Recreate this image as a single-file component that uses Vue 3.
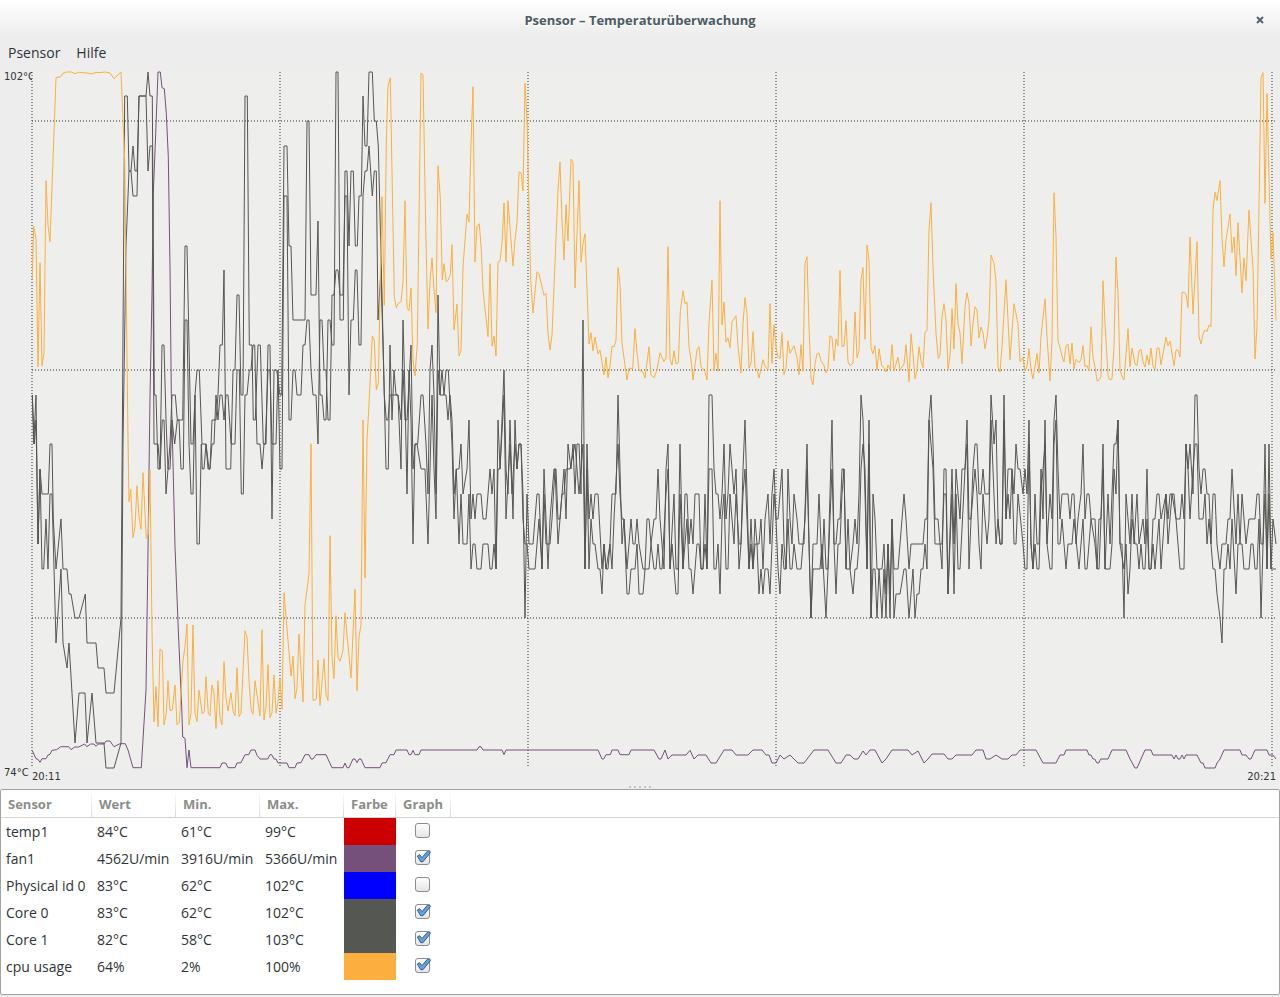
<script setup>
import { reactive, computed } from 'vue'

// Plot space: x 32..1276, y 72..768. Samples are recorded in blocks; each block
// has a pixel origin and its samples are stored in thirds of a pixel.
const PLOT = { left: 32, top: 72, right: 1276, bottom: 768 }
const PER_DEGREE = (PLOT.bottom - PLOT.top) / 28

const parse = (text) => text.trim().split(/\s+/).map((pair) => pair.split(',').map(Number))

const trace = (blocks) =>
  blocks
    .flatMap(([x, y, text]) => parse(text).map(([px, py]) => [x + px / 3, y + py / 3]))
    .map(([x, y]) => `${x.toFixed(1)},${y.toFixed(1)}`)
    .join(' ')

// Temperature samples hold the number of degrees below 102 °C.
const degrees = (blocks) =>
  blocks
    .flatMap(([x, text]) => parse(text).map(([px, d]) => [x + px / 3, PLOT.top + d * PER_DEGREE]))
    .map(([x, y]) => `${x.toFixed(1)},${Math.floor(y)}`)
    .join(' ')

const cpu = trace([
  [0, 60, `97,658 101,498 108,535 114,920 120,608 126,917 132,880 138,362 144,495 150,545 168,53 182,50
    190,39 200,36 214,36 225,41 236,37 260,39 276,42 288,37 296,38 316,36 330,39 342,56 363,36 374,300 384,1140`],
  [0, 430, `387,215 392,178 399,323 405,290 411,167 417,260 423,298 429,128 435,250 439,326 445,313 450,120
    456,600 462,876 468,770 474,890 480,657 487,662 492,885 499,850 504,752 510,842 517,840 525,765 531,884
    538,878 549,690 555,650 561,582 567,885 573,850 579,585 585,850 591,875 597,780 607,852 613,845 618,740
    625,850`],
  [210, 430, `0,857 6,765 12,790 18,896 24,752 30,862 36,885 42,695 48,805 54,843 63,788 69,843 75,858 81,713
    87,860 93,850 105,602 111,620 117,750 123,838 129,853 135,752 150,858 156,599 162,870 168,830 174,704
    180,863 186,848 192,735 198,850 204,815 210,745 216,838 222,488 243,738 249,678 255,806 261,775 267,612
    273,720 279,816 285,525 297,432 303,41 309,812 319,807 324,690 330,827 342,686 348,793 354,812 360,317
    366,680 372,746 378,557 384,682 390,694 399,662 405,548 423,744 435,478 441,782 447,620 453,585 459,-30
    465,444 471,30`],
  [210, 60, `476,1050 487,828 493,840 499,990 505,970 516,410 523,736 529,250 534,78 541,53 553,710 559,743
    565,730 573,725 579,665 585,422 591,743 597,752 603,684 609,900 615,947 622,850`],
  [420, 60, `3,39 9,44 17,500 24,807 30,665 36,594 42,690 48,758 54,317 61,415 67,660 72,611 79,665 85,660
    91,644 96,554 102,810 111,732 117,888 123,872 129,620 141,462 147,486 153,250 159,80 165,606 171,500
    178,491 184,570 189,690 204,830 210,611 216,858 222,828 228,888 234,606 240,603 246,550 252,429 258,606
    264,422 279,618 285,540 291,488 297,336 303,338 309,393 315,69 321,180 327,440 332,660 339,760 351,635
    357,642 366,680 372,706 378,700 384,820 390,870 396,825 402,680 414,390 420,306 426,480 432,600 438,434
    444,543 453,297 459,308 465,684 477,362 483,606 489,550 495,521 507,852 513,818 519,873 525,831 534,882
    540,870 552,944 558,891 564,954 570,918 576,858 582,861 588,840 594,623 600,670 606,850 621,960 627,924`],
  [630, 180, `8,566 15,446 21,518 27,570 39,576 45,594 57,500 63,585 72,593 81,570 90,518 102,545 108,533
    114,200 120,538 126,555 132,512 138,552 145,548 151,395 159,332 165,371 171,367 177,500 183,540 189,600
    201,510 207,500 213,560 225,575 231,600 237,430 246,301 252,573 258,520 264,574 270,62 276,435 282,366
    288,486 294,474 300,503 306,426 318,407 324,500 333,579 339,430 345,353 351,400 357,565 363,550 369,455
    375,562 381,570 387,594 399,539 405,558 414,570 420,371 426,550 432,434 438,500 444,530 450,536 456,458
    462,584 468,565 474,482 480,520 492,497 501,533 507,584 513,494 519,574 525,250 531,230 537,440 543,595
    549,615 555,550 561,522 567,519 573,543 582,557 588,578 594,565 600,467 606,472 612,543 618,477 624,497`],
  [840, 180, `0,271 6,500 12,498 18,422 24,545 30,557 39,549 45,396 51,533 57,512 63,300 69,263 75,478 81,195
    87,240 93,505 99,521 105,497 111,570 117,506 125,557 132,563 138,576 144,555 150,568 156,494 162,573
    174,531 180,570 192,551 198,494 207,605 213,461 219,520 225,597 231,570 237,500 243,543 249,563 255,456
    261,452 267,150 273,68 279,260 288,460 295,536 300,525 306,410 312,371 318,420 324,569 330,530 336,386
    342,507 348,311 354,432 360,460 366,551 375,380 381,338 387,370 393,498 399,430 405,380 411,390 417,474
    423,441 429,458 435,507 441,474 447,420 453,225 462,250 468,305 474,560 480,576 486,500 498,299 510,540
    522,371 534,432 540,545 549,533 555,572 561,560 567,506 573,570 579,597 591,521 597,579 603,470 615,356
    621,470 630,603 636,480`],
  [1050, 60, `12,398 18,530 24,843 30,862 36,889 42,906 48,858 54,852 60,912 66,849 72,927 78,898 87,908
    93,898 99,857 105,920 111,917 117,933 123,800 129,893 135,920 141,963 147,960 153,950 159,662 165,790
    174,948 180,960 186,957 192,860 198,591 204,700 210,930 216,950 222,960 234,806 240,920 246,864 255,912
    261,917 267,873 273,868 279,906 285,921 291,885 297,915 303,864 309,920 315,928 321,864 327,864 333,915
    348,831 354,857 360,843 372,917 378,870 384,870 390,891 396,697 402,697 408,702 414,743 420,531 429,762
    441,545 447,830 453,852 459,822 465,810 471,815 477,795 483,800 489,450 495,396 501,422 510,362 516,535
    522,621 528,540 540,462 546,578 552,531 558,647 564,488 576,699 582,594 588,662 597,450 603,540 609,625
    615,897 621,800 627,440 633,53 639,38 645,430 651,101 663,597 669,518 678,782`],
])

const fan = trace([
  [0, 430, `97,962 108,986 114,988 120,997 126,986 138,986 144,975 150,973 156,961 170,959 182,950 206,950
    213,959 224,951 236,951 254,942 260,950 272,942 282,942 288,949 295,942 312,942 318,933 330,933 336,942
    342,950 360,941 376,941 384,960 399,1013 424,1013 438,780 443,430`],
  [0, 60, `450,1011 456,700 460,400 467,220 474,36 481,36 486,83 493,86 499,160 505,290 510,620 514,1000`],
  [0, 430, `518,60 525,350 535,600 545,830 548,921 555,925 561,1013 567,960 573,1013`],
  [210, 430, `0,1013 30,1013 36,999 47,999 54,1013 75,1013 81,999 93,998 105,974 116,974 123,960 135,960
    141,976 150,987 173,987 180,974 185,974 192,987 198,987 204,999 231,999 237,1013 255,1013 261,999
    273,998 285,974 297,974 303,987 309,987 318,974 348,974 366,1013 399,1013 405,999 411,1013 417,1013
    429,987 435,987 441,998 447,987 453,987 465,1013 510,1013 516,999 528,998 540,974 552,974 558,960
    591,960 597,974 603,974 609,961 615,974 627,974`],
  [420, 370, `3,1140 171,1140 177,1130 183,1130 189,1140 246,1140 252,1154 258,1140 534,1140 546,1167
    551,1167 558,1154 571,1154 576,1140 594,1140 600,1154 627,1154 633,1140`],
  [630, 430, `72,960 87,987 93,987 105,960 114,987 126,975 168,975 180,961 192,987 204,975 228,975 243,999
    258,999 282,960 306,960 318,975 354,975 369,960 396,960 408,975 417,975 426,999 438,999 450,975 462,987
    480,975 504,999 522,999 552,960 594,960 618,999 633,999 648,975 660,975 672,987 684,987 699,963 708,975
    720,960 735,960 756,999 768,987 786,960 834,960 846,975 864,963 882,999 894,987 906,972 942,972 954,987
    966,987 978,975 1026,975 1038,960 1059,960 1068,987 1080,987 1098,975 1116,987 1134,987 1146,975
    1158,975 1170,960 1218,960 1239,999`],
  [1050, 380, `0,1149 18,1149 30,1125 42,1125 48,1110 111,1110 117,1125 123,1125 129,1137 134,1137 141,1149
    146,1149 152,1137 174,1137 186,1110 228,1110 240,1137 255,1164 261,1164 285,1110 303,1110 309,1125
    366,1125 372,1137 378,1125 384,1137 390,1137 396,1125 402,1137 408,1125 441,1125 453,1149 459,1149
    465,1164 495,1164 501,1149 510,1137 522,1110 570,1110 576,1125 588,1125 597,1137 603,1137 615,1110
    651,1110 657,1125 669,1125 678,1137`],
])

const core0 = degrees([
  [0, `97,13 101,15 108,13 114,19 120,16 126,17 145,17 150,15 156,15 160,18 168,20 183,18 189,20 201,20
    207,21 213,21 225,22 237,22 256,21 261,23 288,23 294,24 312,24 318,25 342,25 363,22 374,1 382,1 387,4
    393,4 399,3 405,4 411,4 417,1 438,1 444,0 450,1 457,1 463,13 468,13 474,16 480,16 486,11 492,11 498,14
    504,16 510,15 516,13 526,13 532,14 548,14 555,7 561,7 567,11 573,15 579,15 585,13 591,12 598,12 606,15
    618,15 624,16 630,16`],
  [210, `6,14 18,14 24,13 30,11 37,11 42,8 48,16 62,16 69,12 75,12 81,9 87,9 93,13 99,13 105,1 112,1
    118,11 126,11 130,14 136,14 144,11 151,11 160,15 168,15 174,11 180,11 186,18 192,12 200,12 210,13 215,13
    222,3 231,3 237,7 243,7 249,10 285,10 291,2 297,2 303,9 318,9 324,6 330,13 336,13 342,14 348,14 354,10
    360,10 366,11 372,11 378,0 384,0 390,10 400,10 405,4 411,4 417,7 423,4 430,4 436,7 442,7 447,5 454,5
    459,1 465,3 471,3 477,0 487,0 493,2 499,2 505,3 516,9 528,16 535,16 540,11 546,14 552,12 558,13 564,13
    573,16 579,10 585,13 591,17 597,12 603,14 609,19 615,15 623,15 628,14`],
  [420, `3,13 9,13 18,15 24,17 30,12 36,11 42,13 48,17 54,9 60,13 78,13 84,14 90,13 96,14 102,17 109,16
    117,16 123,15 129,17 141,16 147,14 153,18 159,17 165,18 171,17 183,17 189,18 198,18 204,17 210,16 216,17
    222,16 228,20 234,14 240,16 246,14 252,12 258,16 264,17 270,14 279,18 285,14 291,16 297,15 303,15 309,17
    315,22 321,17 327,19 339,19 351,17 357,17 366,20 372,16 378,18 384,20 390,18 402,16 408,16 414,18 420,18
    432,16 438,18 444,15 453,16 459,15 465,17 471,15 477,15 483,17 489,10 495,20 501,15 507,18 513,17 519,18
    525,17 534,17 546,20 552,19 558,20 570,19 576,17 588,17 594,13 600,16 606,19 612,18 621,20`],
  [630, `3,18 9,19 15,19 21,18 27,19 39,20 45,20 51,18 57,18 63,19 72,18 78,18 84,16 90,18 102,20 108,16
    114,15 120,20 132,17 138,20 144,20 150,15 159,20 165,17 171,17 177,19 183,18 189,19 195,17 207,17 213,20
    219,20 225,17 231,20 237,13 246,13 252,16 258,17 264,17 270,18 276,17 282,15 288,18 294,17 300,15 312,17
    318,16 327,20 333,19 339,16 345,14 351,17 357,20 363,18 369,20 375,18 381,19 387,19 393,18 399,20 405,18
    414,17 420,19 426,17 432,16 438,18 444,18 456,16 462,19 468,20 474,16 480,18 486,19 492,17 501,18 507,19
    522,19 531,15 537,19 543,22 549,19 561,19 567,17 576,20 582,18 588,20 594,20 600,17 606,14 612,19 618,19
    624,18`],
  [840, `0,18 6,16 12,16 18,20 24,18 30,20 39,19 45,18 51,19 57,17 63,13 69,14 75,17 81,20 87,14 93,22
    99,17 105,18 111,20 126,20 132,19 138,21 144,19 150,21 156,18 162,20 174,20 180,19 192,17 198,18 207,20
    213,19 249,19 255,18 261,18 267,14 273,13 279,15 285,18 294,18 306,20 312,16 318,16 324,21 336,16 342,19
    348,16 360,18 366,16 375,16 381,14 387,18 393,18 399,16 405,15 411,15 417,17 423,17 429,16 435,17 447,17
    453,13 462,15 468,14 474,18 480,19 486,19 492,13 498,18 504,16 516,16 522,17 528,15 534,16 540,16 549,17
    555,16 561,17 567,14 573,19 579,20 585,17 591,19 597,19 603,16 609,18 615,14 621,19 630,17 636,18 642,14`],
  [1050, `18,13 24,16 30,18 36,17 54,17 60,18 66,17 72,17 78,19 84,18 93,17 99,15 105,18 111,17 117,17
    123,18 135,18 141,20 147,18 153,18 159,15 165,20 174,17 180,19 192,15 198,15 204,14 210,19 216,19 222,22
    228,17 240,19 246,17 252,19 261,17 267,19 279,18 285,19 291,16 297,20 303,20 309,18 315,18 321,17 327,17
    333,18 348,17 354,18 360,17 372,17 378,18 390,18 396,17 402,18 408,15 414,16 420,15 429,17 435,13 441,13
    447,16 453,17 459,16 465,16 471,17 477,17 483,19 489,17 495,17 501,19 510,20 516,19 528,19 534,18 540,18
    546,16 558,19 564,17 570,19 576,17 588,19 597,18 615,18 621,17 627,17 633,19 639,19 645,15 651,20 657,15
    663,20 669,18 678,19`],
])

const core1 = degrees([
  [0, `97,13 103,15 108,14 114,19 120,16 126,20 131,20 138,18 144,20 150,17 156,17 168,23 183,20 189,23
    201,24 207,23 225,27 237,25 255,25 261,27 276,25 288,27 312,27 318,28 342,28 363,27 369,15 378,7 387,4
    393,4 399,5 411,5 417,1 438,1 444,4 450,3 457,3 462,15 474,15 480,16 487,14 492,14 498,17 504,16 510,16
    516,14 524,15 532,14 537,14 543,16 550,16 555,10 561,10 567,15 573,17 579,17 585,13 591,19 598,19 604,15
    607,16 612,16 618,15 627,16`],
  [210, `0,16 6,15 12,15 18,13 24,14 30,13 36,13 42,14 48,13 54,13 63,15 75,15 81,12 88,12 94,17 100,17
    105,13 111,13 118,12 123,12 129,11 134,11 141,15 150,15 156,16 162,15 166,15 174,12 180,12 186,15 198,15
    204,12 210,16 216,16 222,5 231,5 237,14 243,14 249,12 255,12 261,13 273,13 279,11 285,11 291,10 297,10
    303,12 309,13 318,13 324,15 330,10 336,10 342,12 348,12 354,14 360,14 366,9 372,9 378,8 384,8 390,9
    399,9 405,5 411,5 417,13 423,10 430,10 436,8 441,8 447,11 453,11 459,5 465,4 471,4 477,3 487,5 493,4
    499,4 504,10 513,8 523,13 529,14 534,14 540,13 564,13 573,14 579,12 585,14 591,14 603,11 609,16 615,15
    621,15`],
  [420, `3,16 15,16 24,19 30,16 36,13 42,16 48,18 54,12 60,13 66,12 72,13 78,12 85,12 96,15 102,18 109,16
    117,19 123,17 129,19 141,19 147,17 153,20 159,19 165,19 171,20 183,20 189,19 204,19 210,20 216,20 222,19
    228,20 234,16 240,16 252,13 258,18 270,15 276,17 285,15 291,16 297,15 303,15 309,18 315,19 321,19 327,20
    345,20 357,18 366,20 372,17 378,19 390,19 396,18 405,16 414,19 426,17 432,17 438,16 450,16 465,15 477,17
    483,16 489,15 495,20 501,16 507,20 513,18 519,19 525,19 534,20 540,20 546,21 552,19 558,20 564,20 570,19
    576,20 582,18 594,15 600,17 606,18 612,18 621,21 627,21`],
  [630, `3,20 15,20 21,19 27,21 39,21 45,20 57,20 63,19 72,20 78,20 84,19 90,20 96,20 108,17 114,16 120,20
    126,19 138,21 144,21 150,17 159,20 165,19 171,18 177,20 183,20 189,21 201,19 207,19 213,20 219,20 225,19
    231,20 237,16 246,16 252,20 258,20 264,19 270,21 276,18 282,17 288,20 294,20 300,17 312,19 318,17 327,19
    333,19 339,17 345,16 357,20 363,19 369,20 375,19 381,19 387,21 393,20 399,21 405,20 414,20 420,21 432,17
    438,18 444,20 450,21 456,19 462,20 468,20 474,18 480,20 486,20 492,19 501,20 513,20 519,19 525,18 531,16
    537,19 543,22 549,20 570,20 576,19 588,22 594,20 606,16 612,19 618,21 624,19`],
  [840, `0,19 6,17 12,16 18,20 30,20 39,21 45,20 51,20 57,19 63,16 69,15 75,16 81,20 87,15 93,22 99,20
    105,20 111,22 117,20 126,22 132,20 138,22 144,19 150,22 156,18 162,22 168,21 180,21 192,20 198,20 207,22
    219,20 225,22 231,21 237,21 243,20 249,20 255,19 261,20 267,14 273,15 279,16 285,19 306,19 312,17 318,17
    324,21 336,17 342,21 348,17 354,20 360,20 375,16 381,15 387,20 393,18 405,16 411,17 417,19 423,20 429,17
    441,19 447,18 453,14 468,19 474,18 480,19 486,19 492,14 498,18 504,17 510,18 516,16 522,19 528,19 534,17
    549,19 555,20 561,20 567,15 573,19 579,20 585,19 591,20 597,20 603,17 615,15 621,19 630,20 636,20 642,15`],
  [1050, `18,14 24,19 30,19 36,18 48,20 54,19 66,19 72,18 87,20 99,18 105,20 111,20 123,18 135,19 141,20
    147,20 159,16 165,20 180,20 186,19 192,16 198,17 204,14 210,19 222,20 228,19 234,21 240,20 246,18 255,19
    261,19 267,20 273,19 279,20 285,20 291,18 297,20 303,20 309,19 315,20 327,18 333,20 348,17 354,19 366,17
    378,18 390,20 402,20 408,15 414,16 420,18 429,16 435,15 441,15 447,18 459,18 465,17 471,19 477,18 489,20
    495,20 501,21 510,22 516,23 522,20 528,20 534,19 540,20 546,18 558,21 564,19 576,19 582,20 597,20 603,19
    609,19 615,20 621,20 627,18 633,22 639,19 645,17 651,20 657,17 663,20 678,20`],
])

const sensors = reactive([
  { id: 'temp1', name: 'temp1', value: '84°C', min: '61°C', max: '99°C', color: '#cc0000', graph: false },
  { id: 'fan1', name: 'fan1', value: '4562U/min', min: '3916U/min', max: '5366U/min', color: '#75507b', graph: true, points: fan },
  { id: 'phys', name: 'Physical id 0', value: '83°C', min: '62°C', max: '102°C', color: '#0000ff', graph: false },
  { id: 'core0', name: 'Core 0', value: '83°C', min: '62°C', max: '102°C', color: '#555753', graph: true, points: core0 },
  { id: 'core1', name: 'Core 1', value: '82°C', min: '58°C', max: '103°C', color: '#555753', graph: true, points: core1 },
  { id: 'cpu', name: 'cpu usage', value: '64%', min: '2%', max: '100%', color: '#fcaf3e', graph: true, points: cpu },
])

const plotted = computed(() => sensors.filter((s) => s.graph && s.points))
const gridX = [32, 280, 528, 776, 1024, 1272]
const gridY = [121, 370, 618]
const dots = [0, 1, 2, 3, 4]
</script>

<template>
  <div class="window">
    <header class="titlebar">
      <h1>Psensor – Temperaturüberwachung</h1>
      <button class="close" type="button" aria-label="Schließen">
        <svg viewBox="0 0 8 8" width="8" height="8"><path d="M1 1L7 7M7 1L1 7" /></svg>
      </button>
    </header>

    <nav class="menubar">
      <button type="button">Psensor</button>
      <button type="button">Hilfe</button>
    </nav>

    <section class="chart">
      <div class="y-axis"><span>102°C</span><span>74°C</span></div>
      <svg class="plot" viewBox="32 72 1244 696" preserveAspectRatio="none">
        <g class="grid">
          <line v-for="x in gridX" :key="'x' + x" :x1="x" :x2="x" y1="72" y2="768" />
          <line v-for="y in gridY" :key="'y' + y" x1="32" x2="1276" :y1="y" :y2="y" />
        </g>
        <polyline v-for="s in plotted" :key="s.id" class="series" :points="s.points" :stroke="s.color" />
      </svg>
      <div class="x-axis"><span>20:11</span><span>20:21</span></div>
    </section>

    <div class="splitter"><i v-for="d in dots" :key="d"></i></div>

    <section class="panel">
      <table>
        <colgroup>
          <col class="c-name" /><col class="c-val" /><col class="c-val" /><col class="c-val" />
          <col class="c-color" /><col class="c-graph" /><col />
        </colgroup>
        <thead>
          <tr>
            <th>Sensor</th><th>Wert</th><th>Min.</th><th>Max.</th><th>Farbe</th><th>Graph</th><td></td>
          </tr>
        </thead>
        <tbody>
          <tr v-for="s in sensors" :key="s.id">
            <td><label :for="s.id">{{ s.name }}</label></td>
            <td>{{ s.value }}</td>
            <td>{{ s.min }}</td>
            <td>{{ s.max }}</td>
            <td :style="{ background: s.color }"></td>
            <td class="toggle">
              <span class="check">
                <input :id="s.id" v-model="s.graph" type="checkbox" />
                <svg v-if="s.graph" viewBox="0 0 48 45" width="16" height="15">
                  <path d="M7 18L14 14L21 23L38 3Q46 0 46 8L24 35L17 35Z" />
                </svg>
              </span>
            </td>
            <td></td>
          </tr>
        </tbody>
      </table>
    </section>
  </div>
</template>

<style>
body {
  margin: 0;
  background: #ededed;
}
</style>

<style scoped>
.window {
  display: flex;
  flex-direction: column;
  box-sizing: border-box;
  min-height: 100vh;
  padding-bottom: 2px;
  color: #2e3436;
  background: #ededed;
  font-family: "Open Sans", "Noto Sans", sans-serif;
  font-size: 14px;
}
button {
  padding: 0;
  border: 0;
  background: none;
  color: inherit;
  font: inherit;
}
.titlebar {
  display: grid;
  grid-template-columns: 41px 1fr 41px;
  align-items: center;
  height: 40px;
  background: linear-gradient(#ffffff, #ededed 36px);
}
h1 {
  grid-column: 2;
  margin: 0;
  color: #4b5b63;
  font-size: 13px;
  font-weight: 700;
  line-height: 20px;
  text-align: center;
  text-shadow: 0 1px #ffffff;
}
.close {
  display: flex;
  justify-content: center;
}
.close path {
  fill: none;
  stroke: #56666d;
  stroke-width: 2;
}
.menubar {
  display: flex;
  gap: 16px;
  height: 32px;
  padding: 0 8px;
  line-height: 26px;
}
.menubar button {
  height: 26px;
}
.chart {
  display: grid;
  flex: 1;
  grid-template-columns: 32px 1fr;
  grid-template-rows: 1fr 16px;
  min-height: 240px;
  padding-right: 4px;
  font: 10px/10px "DejaVu Sans", sans-serif;
}
.y-axis {
  display: flex;
  grid-row: 1 / 3;
  flex-direction: column;
  justify-content: space-between;
  padding: 0 0 6px 4px;
  white-space: nowrap;
}
.plot {
  width: 100%;
  height: 100%;
  min-height: 0;
  overflow: visible;
  background: #eeeeec;
  contain: size;
}
.grid line {
  stroke: #2e2e2e;
  stroke-dasharray: 1 2;
  vector-effect: non-scaling-stroke;
}
.series {
  fill: none;
  stroke-width: 1;
  vector-effect: non-scaling-stroke;
}
.x-axis {
  display: flex;
  justify-content: space-between;
  padding-top: 4px;
}
.splitter {
  display: flex;
  justify-content: center;
  align-items: center;
  gap: 3px;
  height: 5px;
}
.splitter i {
  width: 2px;
  height: 2px;
  background: #c6c6c6;
}
.panel {
  padding-bottom: 14px;
  border: 1px solid #a1a5a2;
  border-radius: 2px;
  background: #ffffff;
}
table {
  width: 100%;
  border-collapse: collapse;
  table-layout: fixed;
}
.c-name {
  width: 91px;
}
.c-val {
  width: 84px;
}
.c-color {
  width: 52px;
}
.c-graph {
  width: 55px;
}
thead tr {
  height: 28px;
  background: linear-gradient(to top, #d3d3d1 1px, #ffffff 1px);
}
th {
  padding: 0 0 0 7px;
  background: linear-gradient(#ffffff, #d8d8d6) right / 1px 100% no-repeat;
  color: #8b8d88;
  font-size: 13px;
  font-weight: 700;
  text-align: left;
}
tbody tr {
  height: 27px;
}
td {
  padding: 0 0 0 5px;
  white-space: nowrap;
}
.toggle {
  padding: 0 2px 0 0;
  text-align: center;
}
.check {
  position: relative;
  display: block;
  width: 15px;
  height: 15px;
  margin: 0 auto 2px;
}
.check input {
  display: block;
  box-sizing: border-box;
  width: 15px;
  height: 15px;
  margin: 0;
  border: 1px solid #8c8c8a;
  border-radius: 3px;
  appearance: none;
  background: linear-gradient(#ffffff, #e6e6e6);
}
.check svg {
  position: absolute;
  top: 0;
  left: 0;
  pointer-events: none;
}
.check path {
  fill: #6d9fd8;
  stroke: #2c5a97;
  stroke-width: 3;
  stroke-linejoin: round;
}
</style>
